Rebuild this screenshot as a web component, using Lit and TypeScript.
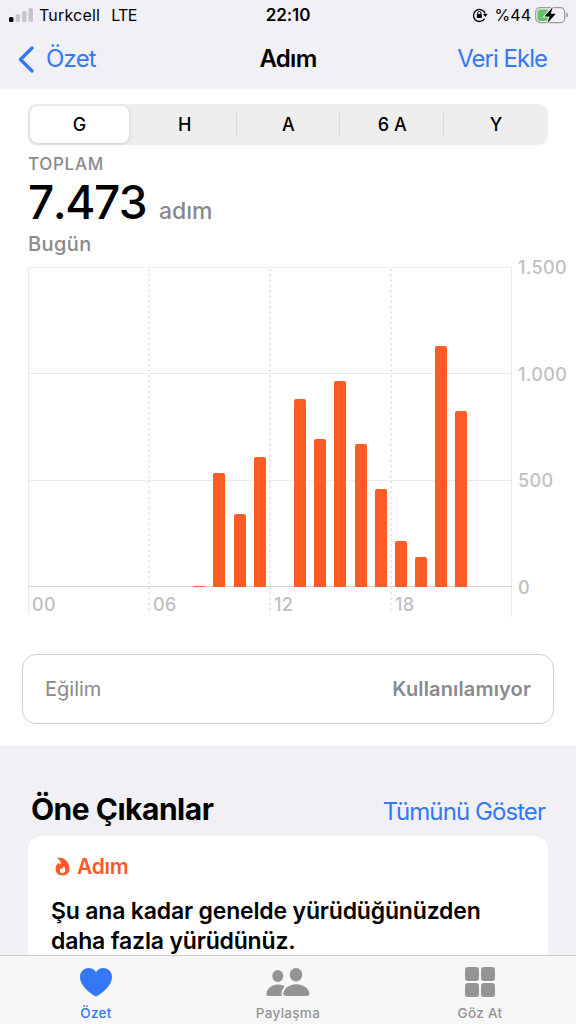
import { LitElement, html, svg, css } from 'lit';
import { customElement, property, state } from 'lit/decorators.js';
import { classMap } from 'lit/directives/class-map.js';

const MAX_STEPS = 1500;
const STEPS = [
  0, 0, 0, 0, 0, 0, 0, 0, 6, 536, 344, 608, 0, 880, 696, 967, 670, 459, 216,
  142, 1128, 824, 0, 0,
];

@customElement('step-chart')
class StepChart extends LitElement {
  @property({ type: Array }) values: number[] = [];

  static styles = css`
    :host {
      display: grid;
      grid-template-columns: 484px 1fr;
      height: 350px;
      font-size: 18px;
      font-weight: 450;
      color: #bfbfc1;
    }
    .plot {
      display: grid;
      grid-template: 320px 30px / 100%;
    }
    .lines {
      grid-area: 1 / 1 / 3 / 2;
      display: block;
    }
    .bars {
      grid-area: 1 / 1;
      display: grid;
      grid-template-columns: repeat(24, 1fr);
      align-items: end;
      justify-items: center;
      width: 483.7px;
    }
    .bar {
      width: 12px;
      border-radius: 2px 2px 0 0;
      background: #ff5b24;
    }
    .hours {
      grid-area: 2 / 1;
      display: grid;
      grid-template-columns: repeat(4, 1fr);
      line-height: 22px;
      padding-top: 7px;
      letter-spacing: 0.3px;
    }
    .hours span {
      padding-left: 4px;
    }
    .scale {
      display: flex;
      flex-direction: column;
      justify-content: space-between;
      height: 342px;
      margin-top: -10px;
      padding-left: 6px;
      line-height: 22px;
      letter-spacing: 0.4px;
    }
  `;

  render() {
    return html`
      <div class="plot">
        <svg class="lines" width="484" height="350" fill="none" stroke="#ebebec">
          <path d="M0 .5H484M0 106.5H484M0 213.5H484M.5 0V347M483.5 0V350" />
          <path d="M0 319.5H484" stroke="#d6d6d8" />
          ${[121, 242, 363].map(
            x => svg`<path d="M${x} 2V347" stroke="#e5e5e7" stroke-width="2" stroke-dasharray="2 3.3" />`
          )}
        </svg>
        <div class="bars">
          ${this.values.map(v =>
            v
              ? html`<div class="bar" style="height:${(v / MAX_STEPS) * 320}px"></div>`
              : html`<div></div>`
          )}
        </div>
        <div class="hours">
          ${['00', '06', '12', '18'].map(h => html`<span>${h}</span>`)}
        </div>
      </div>
      <div class="scale">
        ${['1.500', '1.000', '500', '0'].map(n => html`<span>${n}</span>`)}
      </div>
    `;
  }
}

const heart = svg`<svg width="32" height="30" viewBox="0 0 32 30" fill="currentColor">
  <path d="M16 29.500C15 29.500 0 20.500 0 10C0 4.600 3.900 1 8.500 1C11.700 1 14.400 2.400 16 5.200C17.600 2.400 20.300 1 23.500 1C28.100 1 32 4.600 32 10C32 20.500 17 29.500 16 29.500Z" />
</svg>`;

const people = svg`<svg width="44" height="30" viewBox="0 0 44 30" fill="currentColor">
  <ellipse cx="11.800" cy="9.100" rx="5.500" ry="6" />
  <path d="M2.500 29C1.100 29 .4 28.200 .4 27C.4 22.800 4.800 17.500 11.800 17.500C14.500 17.500 16.800 18.200 18.600 19.400C16.500 21.500 15.300 24.500 15.500 26.800C15.500 27.800 15.700 28.500 16.200 29Z" />
  <ellipse cx="30" cy="7.700" rx="6.300" ry="6.700" />
  <path d="M20 29C18 29 17.200 28 17.200 26.800C17.200 22.700 22.300 17.300 30.300 17.300C38.300 17.300 43.400 22.700 43.400 26.800C43.400 28 42.600 29 40.600 29Z" />
</svg>`;

const grid = svg`<svg width="30" height="30" viewBox="0 0 30 30" fill="currentColor">
  <rect width="14" height="14" rx="3" />
  <rect x="16" width="14" height="14" rx="3" />
  <rect y="16" width="14" height="14" rx="3" />
  <rect x="16" y="16" width="14" height="14" rx="3" />
</svg>`;

const TABS = [
  { label: 'Özet', icon: heart },
  { label: 'Paylaşma', icon: people },
  { label: 'Göz At', icon: grid },
];

@customElement('app-root')
class AppRoot extends LitElement {
  @state() range = 'G';
  @state() tab = 'Özet';

  static styles = css`
    :host {
      display: flex;
      flex-direction: column;
      width: 576px;
      height: 1024px;
      overflow: hidden;
      background: #f1f0f5;
      color: #000;
      font-family: Inter, 'Liberation Sans', sans-serif;
      white-space: nowrap;
    }
    svg {
      display: block;
    }
    .status {
      display: grid;
      grid-template-columns: 1fr auto 1fr;
      align-items: center;
      height: 30px;
      padding: 0 7px 0 9px;
      font-size: 16px;
    }
    .carrier {
      display: flex;
      align-items: center;
    }
    .carrier span {
      margin-left: 6px;
      letter-spacing: 0.2px;
    }
    .carrier .net {
      margin-left: 11px;
      letter-spacing: -0.6px;
    }
    .clock {
      padding-right: 2px;
      font-weight: 600;
      font-size: 17px;
      letter-spacing: -0.1px;
    }
    .battery {
      display: flex;
      align-items: center;
      justify-content: flex-end;
    }
    .battery span {
      margin: 0 4px 0 7px;
    }
    .nav {
      display: grid;
      grid-template-columns: 1fr auto 1fr;
      align-items: center;
      height: 59px;
      box-sizing: border-box;
      padding-bottom: 2px;
      font-size: 24px;
    }
    .back,
    .add,
    .all {
      color: #3478f6;
    }
    .back {
      display: flex;
      align-items: center;
      gap: 12px;
      padding-left: 17px;
      letter-spacing: -0.8px;
    }
    .add {
      padding-right: 29px;
      text-align: right;
      letter-spacing: -1px;
    }
    .nav h1 {
      margin: 0;
      font-size: 24px;
      font-weight: 600;
      letter-spacing: -0.7px;
    }
    .summary {
      height: 657px;
      box-sizing: border-box;
      padding: 15px 0 0 28px;
      background: #fff;
    }
    .segments {
      display: grid;
      grid-template-columns: repeat(5, 1fr);
      width: 520px;
      height: 41px;
      box-sizing: border-box;
      padding: 2px 0 2px 1px;
      border-radius: 9px;
      background: #eeeeef;
    }
    .segment {
      display: flex;
      align-items: center;
      justify-content: center;
      border-radius: 8px;
      font-size: 18px;
      font-weight: 500;
    }
    .segment.active {
      margin: 0 4px 0 1px;
      background: #fff;
      box-shadow: 0 1px 4px rgba(0, 0, 0, 0.14);
    }
    .segment.split {
      background: linear-gradient(#d8d8da, #d8d8da) right center / 1px 24px
        no-repeat;
      border-radius: 0;
    }
    .caption {
      margin-top: 8px;
      font-size: 17px;
      line-height: 22px;
      font-weight: 500;
      letter-spacing: 0.7px;
      color: #8a8a8d;
    }
    .total {
      display: flex;
      align-items: baseline;
      gap: 13px;
      height: 46px;
      line-height: 54px;
      font-size: 46px;
      font-weight: 500;
    }
    .total span {
      font-kerning: none;
      letter-spacing: -1.5px;
    }
    .total small,
    .day {
      color: #8a8a8d;
      font-weight: 500;
    }
    .total small {
      font-size: 23px;
    }
    .day {
      margin-top: 11px;
      font-size: 20px;
      line-height: 24px;
      letter-spacing: 0.4px;
    }
    step-chart {
      margin-top: 11px;
    }
    .trend {
      display: flex;
      align-items: center;
      justify-content: space-between;
      width: 532px;
      height: 70px;
      box-sizing: border-box;
      margin: 37px 0 0 -6px;
      padding: 0 22px;
      border: 1px solid #cfcfd1;
      border-radius: 14px;
      font-size: 20px;
      color: #8a8a8d;
    }
    .trend b {
      font-weight: 600;
      letter-spacing: 0.15px;
    }
    .highlights {
      flex: 1;
      min-height: 0;
      display: flex;
      flex-direction: column;
      padding: 44px 28px 0;
    }
    .heading {
      display: flex;
      align-items: baseline;
      justify-content: space-between;
      height: 46px;
      padding: 0 3px;
    }
    .heading h2 {
      margin: 0;
      font-size: 30px;
      line-height: 38px;
      font-weight: 700;
      letter-spacing: -0.5px;
    }
    .all {
      font-size: 24px;
      letter-spacing: -0.93px;
    }
    .card {
      flex: 1;
      min-height: 0;
      padding: 15px 23px 0;
      border-radius: 14px 14px 0 0;
      background: #fff;
    }
    .kind {
      display: flex;
      align-items: center;
      gap: 7px;
      padding-left: 4px;
      font-size: 21px;
      line-height: 32px;
      font-weight: 600;
      letter-spacing: -0.3px;
      color: #fa5b2a;
    }
    .kind svg {
      margin-top: -2px;
    }
    .card p {
      margin: 13px 0 0;
      font-size: 23px;
      line-height: 30px;
      font-weight: 600;
      letter-spacing: -0.18px;
    }
    .tabs {
      display: grid;
      grid-template-columns: repeat(3, 1fr);
      height: 69px;
      box-sizing: border-box;
      border-top: 1px solid #c9c9cc;
      background: #f7f7f8;
    }
    .tab {
      display: flex;
      flex-direction: column;
      align-items: center;
      gap: 6px;
      padding-top: 11px;
      color: #949496;
      font-size: 13.5px;
      line-height: 20px;
      font-weight: 500;
      letter-spacing: 0.3px;
    }
    .tab.active {
      color: #3478f6;
    }
  `;

  render() {
    const ranges = ['G', 'H', 'A', '6 A', 'Y'];
    return html`
      <div class="status">
        <div class="carrier">
          <svg width="24" height="16">
            <rect y="10" width="4.500" height="5" rx="1.500" />
            <g fill="#c6c6ca">
              <rect x="6.500" y="7" width="4.500" height="8" rx="1.500" />
              <rect x="13" y="4" width="4.500" height="11" rx="1.500" />
              <rect x="19.500" y="1" width="4.500" height="14" rx="1.500" />
            </g>
          </svg>
          <span>Turkcell</span><span class="net">LTE</span>
        </div>
        <div class="clock">22:10</div>
        <div class="battery">
          <svg width="16" height="16" viewBox="0 0 16 16">
            <path d="M12.600 11.700A6 6 0 1 1 13.200 6.500" fill="none" stroke="#000" stroke-width="1.300" />
            <path d="M10.900 7H15.600L13.400 10Z" />
            <rect x="4.800" y="7" width="5" height="4" rx=".6" />
            <path d="M5.700 7.500V6A1.600 1.600 0 0 1 8.900 6V7.500" fill="none" stroke="#000" />
          </svg>
          <span>%44</span>
          <svg width="34" height="20" viewBox="0 0 34 20">
            <rect x=".7" y="2.700" width="29" height="15" rx="4.500" fill="none" stroke="#9b9b9f" stroke-width="1.200" />
            <rect x="2.500" y="4.500" width="11.500" height="11.400" rx="2.500" fill="#62c466" />
            <path d="M31.300 7.500C33.600 8 33.600 12 31.300 12.500Z" fill="#9b9b9f" />
            <path d="M17.800 2L9.500 11.500H14.500L12.300 18.300L20.800 8.800H15.700Z" stroke="#f1f0f5" stroke-width="2" paint-order="stroke" />
          </svg>
        </div>
      </div>
      <div class="nav">
        <div class="back">
          <svg width="17" height="28" fill="none" stroke="currentColor" stroke-width="3.300" stroke-linecap="round" stroke-linejoin="round">
            <path d="M15 3L3.500 14.500L15 26" />
          </svg>
          <span>Özet</span>
        </div>
        <h1>Adım</h1>
        <div class="add">Veri Ekle</div>
      </div>
      <div class="summary">
        <div class="segments">
          ${ranges.map(
            (r, i) => html`<div
              class=${classMap({
                segment: true,
                active: r === this.range,
                split: i > 0 && i < ranges.length - 1,
              })}
              @click=${() => (this.range = r)}
            >
              ${r}
            </div>`
          )}
        </div>
        <div class="caption">TOPLAM</div>
        <div class="total"><span>7.473</span><small>adım</small></div>
        <div class="day">Bugün</div>
        <step-chart .values=${STEPS}></step-chart>
        <div class="trend"><span>Eğilim</span><b>Kullanılamıyor</b></div>
      </div>
      <div class="highlights">
        <div class="heading">
          <h2>Öne Çıkanlar</h2>
          <span class="all">Tümünü Göster</span>
        </div>
        <div class="card">
          <div class="kind">
            <svg width="15" height="19" viewBox="0 0 15 19" fill="currentColor">
              <path fill-rule="evenodd" d="M3.200 .6C9.500 .6 14.500 5.300 14.500 11.500C14.500 15.800 11.700 18.500 7.500 18.500C3.300 18.500 .6 15.700 .6 12C.6 9.300 1.700 7 3.100 6.200C3.600 5.900 3.900 6.100 4.100 6.700C4.300 7.300 4.800 7.600 5.300 7.300C6.300 6.500 5.300 3.400 3 1.700C2.300 1.200 2.500 .6 3.200 .6ZM8.300 9C8.500 10.400 7.900 11.300 7.200 11.700C6.700 11.900 6.400 11.700 6.200 11.300C5.300 11.900 4.900 12.800 4.900 13.700C4.900 15.300 6 16.200 7.500 16.200C9.200 16.200 10.300 15 10.300 13.300C10.300 11.400 9.700 9.900 8.300 9Z" />
            </svg>
            <span>Adım</span>
          </div>
          <p>Şu ana kadar genelde yürüdüğünüzden<br />daha fazla yürüdünüz.</p>
        </div>
      </div>
      <div class="tabs">
        ${TABS.map(
          t => html`<div
            class=${classMap({ tab: true, active: t.label === this.tab })}
            @click=${() => (this.tab = t.label)}
          >
            ${t.icon}<span>${t.label}</span>
          </div>`
        )}
      </div>
    `;
  }
}
